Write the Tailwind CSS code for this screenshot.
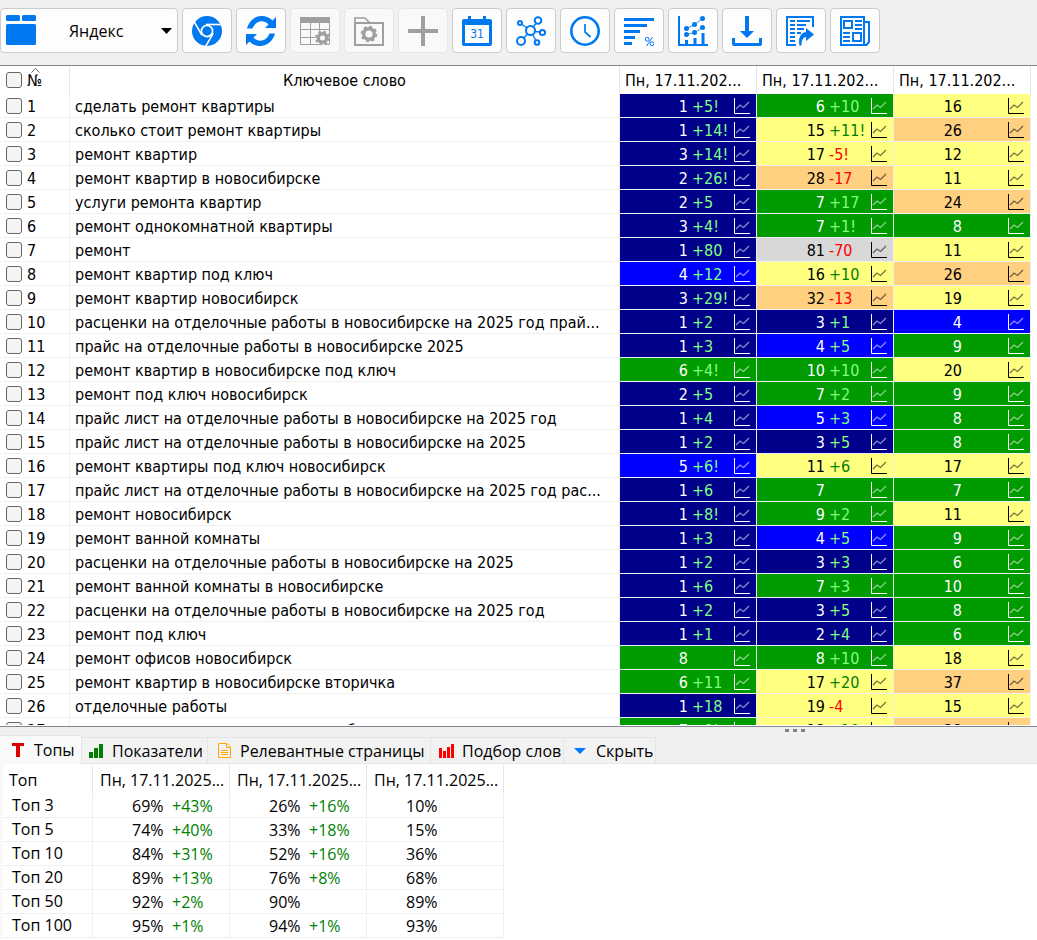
<!DOCTYPE html>
<html lang="ru">
<head>
<meta charset="utf-8">
<meta name="viewport" content="width=device-width, initial-scale=1">
<title>Позиции сайта</title>
<script src="https://cdn.jsdelivr.net/npm/@tailwindcss/browser@4"></script>
</head>
<body class="flex h-screen flex-col overflow-hidden bg-[#f0f0f0] text-black font-['DejaVu_Sans_Condensed','DejaVu_Sans',sans-serif] text-base">

<header class="flex h-[66px] shrink-0 items-start gap-1 border-b border-[#85858f] pt-2 text-[#0078f0]">
  <div class="relative h-[45px] w-[178px]">
    <select aria-label="Поисковая система" class="h-full w-full appearance-none rounded border border-[#cccccc] bg-[#fdfdfd] pl-[68px] text-base text-black font-['Open_Sans','Noto_Sans',sans-serif]">
      <option>Яндекс</option>
    </select>
    <svg class="pointer-events-none absolute top-[7px] left-1.5 size-[30px]" viewBox="0 0 30 30" fill="currentColor"><rect width="14" height="6" rx="1.5"/><rect x="16" width="14" height="6" rx="1.5"/><rect y="9" width="30" height="21" rx="1.5"/></svg>
    <svg class="pointer-events-none absolute top-5 right-1.5 h-1.5 w-[11px]" viewBox="0 0 11 6" fill="#000"><path d="M0 0h11L5.500 6z"/></svg>
  </div>
  <button aria-label="Браузер" class="grid h-[45px] w-[50px] place-items-center rounded border border-[#cccccc] bg-[#fdfdfd]">
    <svg class="size-[30px]" viewBox="0 0 30 30"><circle cx="15" cy="15" r="15" fill="currentColor"/><g stroke="#fdfdfd" stroke-width="1.700" fill="none"><circle cx="15" cy="15" r="5.600"/><path d="M14 8.500H29"/><path d="M14 8.500H29" transform="rotate(120 15 15)"/><path d="M14 8.500H29" transform="rotate(240 15 15)"/></g></svg>
  </button>
  <button aria-label="Обновить" class="grid h-[45px] w-[50px] place-items-center rounded border border-[#cccccc] bg-[#fdfdfd]">
    <svg class="size-[30px]" viewBox="0 0 30 30" fill="currentColor"><path d="M30 1V12H19L22.500 8.500C18 3.500 10 4 6.500 12.500H1C3 5 9 0 15.500 0 20 0 23.500 1.500 26.500 4.500Z"/><path d="M30 1V12H19L22.500 8.500C18 3.500 10 4 6.500 12.500H1C3 5 9 0 15.500 0 20 0 23.500 1.500 26.500 4.500Z" transform="rotate(180 15 15)"/></svg>
  </button>
  <button disabled aria-label="Настройка таблицы" class="grid h-[45px] w-[50px] place-items-center rounded border border-[#e6e6e6] bg-[#f9f9f9] text-[#9f9f9f]">
    <svg class="size-[30px]" viewBox="0 0 30 30"><path d="M0 1h30v6H0z" fill="currentColor"/><path d="M.5 7V28.500H29.500V7M10.500 7V28M19.500 7V28M0 13.500H30M0 21.500H30" stroke="currentColor" fill="none"/><circle cx="22.500" cy="22" r="7" fill="#f9f9f9"/><circle cx="22.500" cy="22" r="4.200" stroke="currentColor" stroke-width="3.400" fill="#f9f9f9"/><circle cx="22.500" cy="22" r="6.400" stroke="currentColor" stroke-width="2" stroke-dasharray="2.800 2.220" fill="none"/></svg>
  </button>
  <button disabled aria-label="Настройка папки" class="grid h-[45px] w-[50px] place-items-center rounded border border-[#e6e6e6] bg-[#f9f9f9] text-[#9f9f9f]">
    <svg class="size-[30px]" viewBox="0 0 30 30" fill="none" stroke="currentColor"><path d="M1 7V2H11L15.500 6.500" stroke-width="1.600"/><path d="M1 7H29V29H1Z" stroke-width="2"/><circle cx="15" cy="18" r="5.300" stroke-width="3.400"/><circle cx="15" cy="18" r="7.300" stroke-width="2" stroke-dasharray="3 2.730"/></svg>
  </button>
  <button disabled aria-label="Добавить" class="grid h-[45px] w-[50px] place-items-center rounded border border-[#e6e6e6] bg-[#f9f9f9] text-[#9f9f9f]">
    <svg class="size-[30px]" viewBox="0 0 30 30"><path d="M13 0h4v13h13v4H17v13h-4V17H0v-4h13z" fill="currentColor"/></svg>
  </button>
  <button aria-label="Календарь" class="grid h-[45px] w-[50px] place-items-center rounded border border-[#cccccc] bg-[#fdfdfd]">
    <svg class="size-[30px]" viewBox="0 0 30 30"><path d="M6 0h3v3h12V0h3v3h4q2 0 2 2v23q0 2-2 2H2q-2 0-2-2V5q0-2 2-2h4z" fill="currentColor"/><path d="M3 9h24v18H3z" fill="#fdfdfd"/><text x="15" y="22" text-anchor="middle" font-size="12" fill="currentColor" font-family="DejaVu Sans Condensed, DejaVu Sans">31</text></svg>
  </button>
  <button aria-label="Связи" class="grid h-[45px] w-[50px] place-items-center rounded border border-[#cccccc] bg-[#fdfdfd]">
    <svg class="size-[30px]" viewBox="0 0 30 30" fill="none" stroke="currentColor" stroke-width="2"><circle cx="14.500" cy="14.500" r="4.500"/><circle cx="4" cy="7" r="2"/><circle cx="22" cy="4.500" r="3.300"/><circle cx="26.500" cy="16.500" r="2.600"/><circle cx="21" cy="26.500" r="2.300"/><circle cx="5" cy="25" r="4"/><path d="M6 8.500L11 12M20 7.500L17 11M19 15.500L24 16M16.500 18.500L20 24.500M11.500 18L8 22" stroke-width="1.400"/></svg>
  </button>
  <button aria-label="Расписание" class="grid h-[45px] w-[50px] place-items-center rounded border border-[#cccccc] bg-[#fdfdfd]">
    <svg class="size-[30px]" viewBox="0 0 30 30" fill="none" stroke="currentColor"><circle cx="15" cy="15" r="13.700" stroke-width="2.600"/><path d="M15 8V16L20.500 21" stroke-width="1.700"/></svg>
  </button>
  <button aria-label="Проценты" class="grid h-[45px] w-[50px] place-items-center rounded border border-[#cccccc] bg-[#fdfdfd]">
    <svg class="size-[30px]" viewBox="0 0 30 30" fill="currentColor"><path d="M0 2h30v3H0zM0 8h23v3H0zM0 14h16v3H0zM0 20h11v3H0zM0 26h8v3H0z"/><g fill="none" stroke="currentColor"><circle cx="23.200" cy="23.200" r="1.900"/><circle cx="28" cy="27.700" r="1.900"/><path d="M28.500 21L22.500 30"/></g></svg>
  </button>
  <button aria-label="Графики" class="grid h-[45px] w-[50px] place-items-center rounded border border-[#cccccc] bg-[#fdfdfd]">
    <svg class="size-[30px]" viewBox="0 0 30 30" fill="currentColor"><path d="M0 0h2v28h28v2H0zM7 24h3v5H7zM15.500 22h3v7h-3zM23.500 17h3v12h-3z"/><circle cx="8.500" cy="12.500" r="2.500"/><circle cx="16.500" cy="8.500" r="2.500"/><circle cx="24.500" cy="2.600" r="2.500"/><circle cx="8.500" cy="18.500" r="2.500"/><circle cx="16.500" cy="16.500" r="2.500"/><circle cx="24.500" cy="11.500" r="2.500"/><path d="M8.500 12.500L16.500 8.500 24.500 2.500M8.500 18.500L16.500 16.500 24.500 11.500" fill="none" stroke="currentColor" stroke-width=".8"/></svg>
  </button>
  <button aria-label="Загрузить" class="grid h-[45px] w-[50px] place-items-center rounded border border-[#cccccc] bg-[#fdfdfd]">
    <svg class="size-[30px]" viewBox="0 0 30 30" fill="currentColor"><path d="M13 0h4v15h5l-7 7-7-7h5zM0 22h3v5h24v-5h3v6q0 2-2 2H2q-2 0-2-2z"/></svg>
  </button>
  <button aria-label="Экспорт" class="grid h-[45px] w-[50px] place-items-center rounded border border-[#cccccc] bg-[#fdfdfd]">
    <svg class="size-[30px]" viewBox="0 0 30 30" fill="currentColor"><path d="M0 0h28v11h-2V2H2v26h8v2H0z"/><path d="M4 4h5v2H4zM4 8h5v2H4zM4 12h5v2H4zM4 16h5v2H4zM4 20h5v2H4zM4 24h5v2H4zM11 4h13v2H11zM11 8h9v2h-9zM11 12h7v2h-7zM11 16h4v2h-4z"/><path d="M20 12l8 6.500-8 6.500v-4c-3 .5-4.500 3-4.500 8.500h-2c-1.500-7 1-13 6.500-13.500z"/></svg>
  </button>
  <button aria-label="Новости" class="grid h-[45px] w-[50px] place-items-center rounded border border-[#cccccc] bg-[#fdfdfd]">
    <svg class="size-[30px]" viewBox="0 0 30 30" fill="none" stroke="currentColor" stroke-width="2"><path d="M1 1H24V29H1ZM24 6H29V26L26.500 29H24"/><path d="M4 5H12V12H4ZM13 17H21V25H13ZM15 5H22M15 9H22M15 13H22M3 17H10M3 21H10M3 25H10"/></svg>
  </button>
</header>

<main class="min-h-0 flex-1 border-b border-[#85858f] bg-white pb-px">
  <div class="h-full overflow-hidden">
    <table class="w-full table-fixed border-separate border-spacing-0">
      <colgroup><col class="w-[70px]"><col><col class="w-[137px]"><col class="w-[137px]"><col class="w-[137px]"><col class="w-1.5"></colgroup>
      <thead>
        <tr class="h-7">
          <th class="relative border-r border-[#e5e5e5] p-0 font-normal">
            <svg class="absolute top-0.5 left-[31px] h-[5px] w-[9px]" viewBox="0 0 9 5" fill="none" stroke="#666"><path d="M.5 4.500L4.500.5 8.500 4.500"/></svg>
            <div class="flex items-center gap-[5px] pl-1.5"><input type="checkbox" id="all" class="size-4 appearance-none rounded-[3px] border border-[#666666] bg-[#f4f4f4]"><label for="all" class="pt-0.5">№</label></div>
          </th>
          <th class="border-r border-[#e5e5e5] p-0 pt-0.5 font-normal">Ключевое слово</th>
          <th class="border-r border-[#e5e5e5] p-0 pt-0.5 pl-[5px] text-left font-normal">Пн, 17.11.202...</th>
          <th class="border-r border-[#e5e5e5] p-0 pt-0.5 pl-[5px] text-left font-normal">Пн, 17.11.202...</th>
          <th class="border-r border-[#e5e5e5] p-0 pt-0.5 pl-[5px] text-left font-normal">Пн, 17.11.202...</th>
          <td></td>
        </tr>
      </thead>
      <tbody id="keywords"></tbody>
    </table>
  </div>
</main>

<section class="shrink-0 font-['Open_Sans','Noto_Sans',sans-serif]">
  <div class="flex h-2 items-start justify-end gap-1 pt-0.5 pr-[232px]" role="separator">
    <span class="h-[3px] w-1 bg-[#808080]"></span><span class="h-[3px] w-1 bg-[#808080]"></span><span class="h-[3px] w-1 bg-[#808080]"></span>
  </div>
  <div class="flex h-[29px] items-end text-base whitespace-nowrap" role="tablist">
    <button role="tab" aria-selected="true" class="flex h-[29px] w-[82px] items-center border-t border-r border-[#e5e5e5] bg-[#f9f9f9] pl-3">
      <svg class="mr-[10px] h-3.5 w-3" viewBox="0 0 12 14"><path d="M0 0h12v3H8v11H4V3H0z" fill="#d00"/></svg>Топы</button>
    <button role="tab" class="flex h-[27px] w-[126px] items-center border-y border-r border-[#e5e5e5] bg-[#f2f2f2] pl-[7px]">
      <svg class="mr-2 h-3.5 w-[15px]" viewBox="0 0 15 14"><path d="M0 8h4v6H0zM5 4h4v10H5zM10 0h4v14h-4z" fill="#008000"/></svg>Показатели</button>
    <button role="tab" class="flex h-[27px] w-[223px] items-center border-y border-r border-[#e5e5e5] bg-[#f2f2f2] pl-[10px]">
      <svg class="mr-2 h-[15px] w-3.5" viewBox="0 0 14 15" fill="none" stroke="#ffa500"><path d="M.5.5H9L12.500 4V14.500H.5ZM8.500.5V4.500H12.500M3 7.500H10M3 9.500H10M3 11.500H10"/></svg>Релевантные страницы</button>
    <button role="tab" class="flex h-[27px] w-[133px] items-center border-y border-r border-[#e5e5e5] bg-[#f2f2f2] pl-2">
      <svg class="mr-2 h-3.5 w-[15px]" viewBox="0 0 15 14"><path d="M0 4h3v10H0zM4 7h3v7H4zM8 3h3v11H8zM12 0h3v14h-3z" fill="red"/></svg>Подбор слов</button>
    <button role="tab" class="flex h-[27px] w-[92px] items-center border-y border-r border-[#e5e5e5] bg-[#f2f2f2] pl-[10px]">
      <svg class="mr-[10px] h-1.5 w-3" viewBox="0 0 12 6"><path d="M0 0h12L6 6z" fill="#0078ff"/></svg>Скрыть</button>
    <div class="h-px flex-1 bg-[#e5e5e5]"></div>
  </div>
  <div class="border-l-[3px] border-[#f9f9f9] bg-white pt-px pb-0.5">
    <table class="w-[501px] table-fixed border-separate border-spacing-0">
      <colgroup><col class="w-[90px]"><col class="w-[137px]"><col class="w-[137px]"><col class="w-[137px]"></colgroup>
      <thead>
        <tr class="h-[29px]">
          <th class="border-r border-[#e5e5e5] p-0 pl-1.5 text-left font-normal">Топ</th>
          <th class="border-r border-[#e5e5e5] p-0 pl-[7px] text-left font-normal">Пн, 17.11.2025...</th>
          <th class="border-r border-[#e5e5e5] p-0 pl-[7px] text-left font-normal">Пн, 17.11.2025...</th>
          <th class="border-r border-[#e5e5e5] p-0 pl-[7px] text-left font-normal">Пн, 17.11.2025...</th>
        </tr>
      </thead>
      <tbody id="tops"></tbody>
    </table>
  </div>
</section>

<script>
// Cell colour by position bucket: background, text colour, growth colour
const tones = {
  n: ['bg-[#00008b]', 'text-white', 'text-[#80ff80]'],
  b: ['bg-[#0000ff]', 'text-white', 'text-[#80ff80]'],
  g: ['bg-[#009b00]', 'text-white', 'text-[#80ff80]'],
  y: ['bg-[#ffff80]', 'text-black', 'text-[#008000]'],
  o: ['bg-[#ffd080]', 'text-black', 'text-[#008000]'],
  s: ['bg-[#d8d8d8]', 'text-black', 'text-[#008000]'],
};
const tone = p => p <= 3 ? 'n' : p <= 5 ? 'b' : p <= 10 ? 'g' : p <= 20 ? 'y' : p <= 50 ? 'o' : 's';

const rows = [
  ['сделать ремонт квартиры', '1 +5!', '6 +10', '16'],
  ['сколько стоит ремонт квартиры', '1 +14!', '15 +11!', '26'],
  ['ремонт квартир', '3 +14!', '17 -5!', '12'],
  ['ремонт квартир в новосибирске', '2 +26!', '28 -17', '11'],
  ['услуги ремонта квартир', '2 +5', '7 +17', '24'],
  ['ремонт однокомнатной квартиры', '3 +4!', '7 +1!', '8'],
  ['ремонт', '1 +80', '81 -70', '11'],
  ['ремонт квартир под ключ', '4 +12', '16 +10', '26'],
  ['ремонт квартир новосибирск', '3 +29!', '32 -13', '19'],
  ['расценки на отделочные работы в новосибирске на 2025 год прай...', '1 +2', '3 +1', '4'],
  ['прайс на отделочные работы в новосибирске 2025', '1 +3', '4 +5', '9'],
  ['ремонт квартир в новосибирске под ключ', '6 +4!', '10 +10', '20'],
  ['ремонт под ключ новосибирск', '2 +5', '7 +2', '9'],
  ['прайс лист на отделочные работы в новосибирске на 2025 год', '1 +4', '5 +3', '8'],
  ['прайс лист на отделочные работы в новосибирске на 2025', '1 +2', '3 +5', '8'],
  ['ремонт квартиры под ключ новосибирск', '5 +6!', '11 +6', '17'],
  ['прайс лист на отделочные работы в новосибирске на 2025 год рас...', '1 +6', '7', '7'],
  ['ремонт новосибирск', '1 +8!', '9 +2', '11'],
  ['ремонт ванной комнаты', '1 +3', '4 +5', '9'],
  ['расценки на отделочные работы в новосибирске на 2025', '1 +2', '3 +3', '6'],
  ['ремонт ванной комнаты в новосибирске', '1 +6', '7 +3', '10'],
  ['расценки на отделочные работы в новосибирске на 2025 год', '1 +2', '3 +5', '8'],
  ['ремонт под ключ', '1 +1', '2 +4', '6'],
  ['ремонт офисов новосибирск', '8', '8 +10', '18'],
  ['ремонт квартир в новосибирске вторичка', '6 +11', '17 +20', '37'],
  ['отделочные работы', '1 +18', '19 -4', '15'],
  ['стоимость ремонта квартир новосибирск', '7 +8!', '18 +10', '28'],
];

const cell = v => {
  const [pos, delta = ''] = v.split(' ');
  const [bg, fg, up] = tones[tone(+pos)];
  const dc = delta[0] === '-' ? 'text-[#ff0000]' : up;
  return `<td class="border-r border-b border-[#f0f0f0] bg-clip-padding p-0 ${bg} ${fg}"><div class="flex h-[23px] items-center"><span class="w-[68px] pt-0.5 text-right">${pos}</span><span class="w-[46px] pt-0.5 pl-1 ${dc}">${delta}</span><svg class="size-4" viewBox="0 0 16 16" fill="none" stroke="currentColor"><path d="M.5 0V15.500H16"/><path d="M2 11L6 7 9.500 9.500 15 4" stroke-width="1.300" opacity=".55"/></svg></div></td>`;
};
document.getElementById('keywords').innerHTML = rows.map(([kw, ...v], i) => `<tr class="h-6">
  <td class="border-r border-b border-[#f0f0f0] p-0"><div class="flex h-[23px] items-center gap-[5px] pl-1.5"><input type="checkbox" id="k${i}" class="size-4 appearance-none rounded-[3px] border border-[#666666] bg-[#f4f4f4]"><label for="k${i}" class="pt-0.5">${i + 1}</label></div></td>
  <td class="overflow-hidden border-r border-b border-[#f0f0f0] p-0 pt-0.5 pl-[5px] leading-[21px] whitespace-nowrap">${kw}</td>${v.map(cell).join('')}<td></td></tr>`).join('');

const tops = [
  [3, '69% +43%', '26% +16%', '10%'],
  [5, '74% +40%', '33% +18%', '15%'],
  [10, '84% +31%', '52% +16%', '36%'],
  [20, '89% +13%', '76% +8%', '68%'],
  [50, '92% +2%', '90%', '89%'],
  [100, '95% +1%', '94% +1%', '93%'],
];
document.getElementById('tops').innerHTML = tops.map(([n, ...v]) => `<tr class="h-6"><td class="border-r border-b border-[#f0f0f0] p-0 pl-[9px] leading-[23px]">Топ ${n}</td>${v.map(x => {
  const [p, d = ''] = x.split(' ');
  return `<td class="border-r border-b border-[#f0f0f0] p-0"><div class="flex h-[23px] items-center pl-[39px]"><span class="w-10">${p}</span><span class="text-[#008000]">${d}</span></div></td>`;
}).join('')}</tr>`).join('');
</script>
</body>
</html>
